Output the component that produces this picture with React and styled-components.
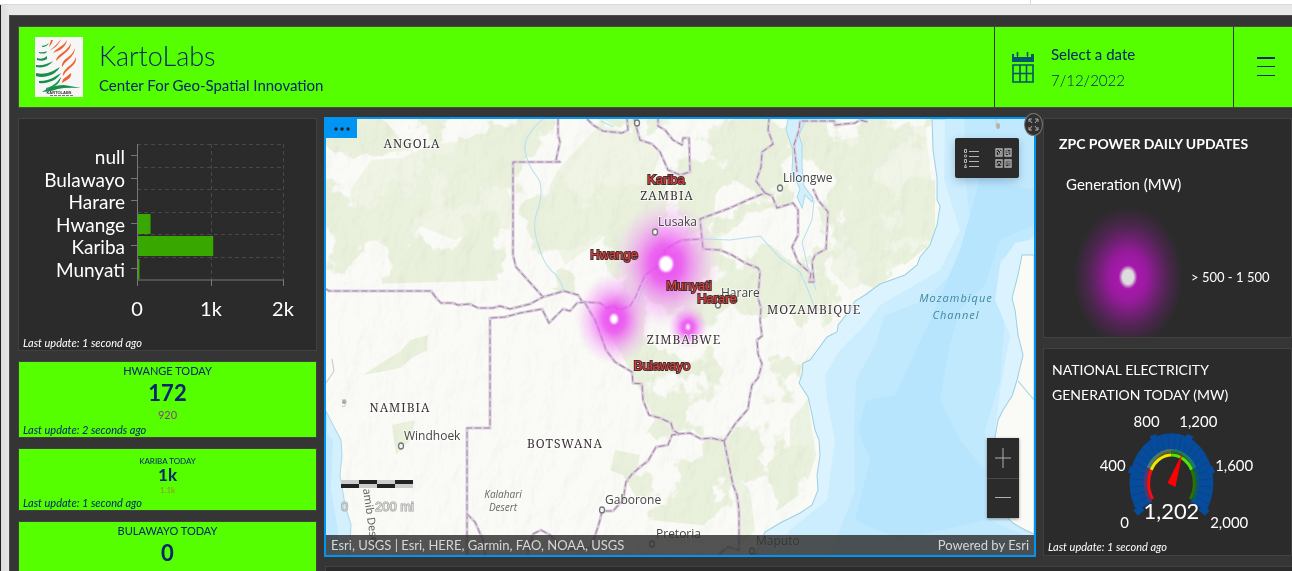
import React from "react";
import styled, { createGlobalStyle } from "styled-components";

const GlobalStyle = createGlobalStyle`
  *, *::before, *::after { box-sizing: border-box; }
  html, body { margin: 0; height: 100%; }
  body {
    background: #e4e4e4;
    color: #fff;
    font-family: Lato, "Liberation Sans", sans-serif;
    overflow: hidden;
  }
  h1, h2, h3, p { margin: 0; font-weight: 400; }
  button {
    margin: 0; padding: 0; border: 0; background: none;
    color: inherit; font: inherit; cursor: pointer;
  }
`;

const Page = styled.div`
  display: flex;
  flex-direction: column;
  height: 100vh;
  overflow: hidden;
`;

const BrowserEdge = styled.div`
  flex: 0 0 5px;
  display: flex;
  background: #fff;
  border-bottom: 1px solid #d9d9d9;
  &::before { content: ""; flex: 1; }
  &::after { content: ""; width: 262px; border-left: 1px solid #d9d9d9; }
`;

const Frame = styled.div`
  flex: 1;
  min-height: 0;
  display: flex;
  padding: 10px 0 0 8px;
  border-left: 1px solid #222;
  background: linear-gradient(90deg, #ddd, #e8e8e8 9px);
`;

const Dashboard = styled.div`
  flex: 1;
  min-width: 0;
  display: flex;
  flex-direction: column;
  gap: 10px;
  padding: 10px 0 0 8px;
  background: #353535;
  border: 1px solid #4c4c4c;
  border-width: 1px 0 0 1px;
`;

const Header = styled.header`
  flex: 0 0 82px;
  display: flex;
  background: #55ff00;
  border: 1px solid #4a4a4a;
  border-right: 0;
  color: #00266e;
`;

const Brand = styled.div`
  flex: 1;
  display: flex;
  align-items: center;
  gap: 16px;
  padding-left: 16px;
`;

const BrandText = styled.div`
  padding-top: 4px;
`;

const BrandTitle = styled.h1`
  font-size: 27px;
  line-height: 32px;
  font-weight: 300;
`;

const BrandSubtitle = styled.p`
  font-size: 15px;
  line-height: 26px;
  font-weight: 400;
`;

const DateButton = styled.button`
  flex: 0 0 239px;
  display: flex;
  align-items: center;
  gap: 17px;
  padding-left: 17px;
  text-align: left;
  border-left: 1px solid #353535;
`;

const DateText = styled.span`
  display: grid;
  font-size: 15px;
  line-height: 26px;
`;

const DateValue = styled.span`
  font-weight: 300;
`;

const MenuButton = styled.button`
  flex: 0 0 59px;
  display: grid;
  place-items: center;
  padding-left: 6px;
  border-left: 1px solid #353535;
`;

const Body = styled.main`
  flex: 1;
  min-height: 0;
  display: flex;
  gap: 7px;
`;

const Column = styled.div`
  flex: ${(p) => p.$grow} 1 0;
  min-width: 0;
  min-height: 0;
  display: flex;
  flex-direction: column;
  gap: 10px;
`;

const Row = styled.div`
  flex: 1;
  min-height: 0;
  display: flex;
  gap: 7px;
`;

const Panel = styled.section`
  flex: ${(p) => p.$flex || "0 0 auto"};
  min-height: 0;
  display: flex;
  flex-direction: column;
  overflow: hidden;
  background: #2b2b2b;
  border: 1px solid #414141;
`;

const Updated = styled.p`
  font-size: 11px;
  line-height: 14px;
  font-style: italic;
  padding-left: 4px;
  text-align: left;
`;

const ChartArea = styled.div`
  height: 217px;
  svg { display: block; width: 100%; height: 100%; }
`;

const Kpi = styled(Panel)`
  background: #55ff00;
  color: #00266e;
  text-align: center;
  padding-top: ${(p) => (p.$small ? 7 : 0)}px;
`;

const KpiTitle = styled.h2`
  font-size: ${(p) => (p.$small ? 8 : 11)}px;
  line-height: ${(p) => (p.$small ? 10 : 17)}px;
`;

const KpiValue = styled.p`
  font-size: ${(p) => (p.$small ? 17 : 22)}px;
  line-height: ${(p) => (p.$small ? 18 : 28)}px;
  font-weight: 700;
`;

const KpiReference = styled.p`
  font-size: ${(p) => (p.$small ? 8 : 11)}px;
  line-height: ${(p) => (p.$small ? 12 : 16)}px;
  color: ${(p) => (p.$small ? "#a58a35" : "#8f3a8f")};
`;

const BottomPanel = styled(Panel)`
  flex: 0 0 5px;
  border-width: 1px 0 0 1px;
  margin-left: 1px;
`;

const MapFrame = styled.section`
  flex: 711 1 0;
  min-width: 0;
  position: relative;
  border: 2px solid #0095f2;
  margin: -1px 0 -1px;
`;

const MapCanvas = styled.svg`
  display: block;
  position: absolute;
  inset: 0;
  width: 100%;
  height: 100%;
`;

const MoreButton = styled.button`
  position: absolute;
  left: 0;
  top: 0;
  width: 31px;
  height: 19px;
  display: grid;
  place-items: center;
  background: #0095f2;
`;

const ExpandButton = styled.button`
  position: absolute;
  right: -9px;
  top: -6px;
  width: 19px;
  height: 23px;
  display: grid;
  place-items: center;
  background: #303030;
  border: 1px solid #777;
  border-radius: 50%;
`;

const MapTools = styled.div`
  position: absolute;
  right: 15px;
  top: 19px;
  width: 64px;
  height: 40px;
  display: flex;
  background: #2b2b2b;
  border-radius: 2px;
  box-shadow: 0 3px 8px rgba(0, 40, 80, 0.25);
  button { flex: 1; display: grid; place-items: center; }
`;

const ZoomControl = styled.div`
  position: absolute;
  right: 15px;
  bottom: 37px;
  width: 32px;
  height: 80px;
  display: flex;
  flex-direction: column;
  background: #2b2b2b;
  box-shadow: 0 1px 3px rgba(0, 0, 0, 0.4);
  button { flex: 1; display: grid; place-items: center; }
  button + button { border-top: 1px solid #484848; }
`;

const Attribution = styled.footer`
  position: absolute;
  left: 0;
  right: 0;
  bottom: 0;
  height: 20px;
  padding: 0 5px;
  display: flex;
  justify-content: space-between;
  background: rgba(50, 50, 50, 0.84);
  color: #d6d6d6;
  font-size: 13px;
  line-height: 20px;
  white-space: nowrap;
`;

const LegendTitle = styled.h2`
  padding: 14px 0 0 15px;
  font-size: 14px;
  line-height: 22px;
  font-weight: 700;
  white-space: nowrap;
`;

const LegendLayer = styled.h3`
  padding: 18px 0 0 22px;
  font-size: 15px;
  line-height: 22px;
`;

const LegendItem = styled.div`
  display: flex;
  align-items: center;
  gap: 8px;
  padding: 12px 0 0 29px;
  font-size: 13px;
  white-space: nowrap;
`;

const Glow = styled.div`
  flex: none;
  width: 110px;
  height: 140px;
  background: radial-gradient(ellipse closest-side, #ddd 0 10%, #a619ac 17%, #981a9e 35%, #742078 52%, #4b264d 74%, #2b2b2b 100%);
`;

const GaugeTitle = styled.h2`
  max-width: 210px;
  padding: 8px 8px 0;
  font-size: 14px;
  line-height: 25px;
`;

const GaugeArea = styled.div`
  height: 133px;
  svg { display: block; width: 100%; height: 100%; }
`;

function Logo() {
  const g = "#159048";
  const o = "#f0622d";
  return (
    <svg width="48" height="60" viewBox="0 0 48 60" role="img" aria-label="KartoLabs logo">
      <rect width="48" height="60" fill="#f6f6f6" />
      <g fill={g}>
        <path d="M7 9q4 0 7-3q-2 4-7 4z" />
        <path d="M4 15q5 1 8-1l-1 2q-4 1-7 0z" />
        <path d="M2 21q6 2 10-2v3q-4 3-10 1z" />
        <path d="M1 28q9 1 17-4q-6 8-17 6z" />
        <path d="M1 36q9 2 17-2l7-4q-4 7-12 9q-7 2-12 0z" />
        <path d="M4 44q10 0 17-5l5-3q-4 7-12 9q-6 2-10 1z" />
        <path d="M11 51q6-1 11-6l4-5q-1 6-6 9q-4 3-9 3z" />
        <path d="M7 55q9-7 22-7l17 3q-15-1-23 1q-8 3-16 3z" />
      </g>
      <g fill={o}>
        <path d="M16 3l2 0q-1 4-4 7z" />
        <path d="M26 2q-2 7-12 12q8-6 12-12z" />
        <path d="M32 3q-1 6-7 10l-7 3q2-3 7-6q5-3 7-7z" />
        <path d="M36 6q0 6-7 11q-4 3-8 7q0-4 6-8q6-4 9-10z" />
        <path d="M40 11q0 6-7 12q-4 3-6 7q-1-5 5-9q6-4 8-10z" />
        <path d="M41 20q1 6-6 11q-5 4-7 8q-1-4 5-9q6-4 8-10z" />
        <path d="M36 36q1 4-4 7l-5 3q0-4 4-6z" />
      </g>
      <text x="24" y="57" fontFamily="Liberation Sans" fontSize="4" fontWeight="700" fill="#333" textAnchor="middle">KARTOLABS</text>
      <path d="M15 58.500h24" stroke="#777" strokeDasharray="3 1" />
    </svg>
  );
}

function CalendarIcon() {
  return (
    <svg width="22" height="32" viewBox="0 0 22 32" fill="none" stroke="#00566b" strokeWidth="1.600" aria-hidden="true">
      <path d="M0 3h2v3h3V3h1v3h9V3h1v3h3V3h3v8H0z" fill="#00566b" stroke="none" />
      <path d="M5.500 1v4M15.500 1v4" />
      <path d="M1 14h20v17H1zM8 14v17M14.500 14v17M1 22.500h20" />
    </svg>
  );
}

const bars = [
  { name: "null", value: 0 },
  { name: "Bulawayo", value: 0 },
  { name: "Harare", value: 0 },
  { name: "Hwange", value: 172 },
  { name: "Kariba", value: 1030 },
  { name: "Munyati", value: 20 },
];

function BarChart() {
  return (
    <svg viewBox="0 0 297 217" role="img" aria-label="Generation by station">
      <g stroke="#484848" strokeDasharray="4 3">
        {[0, 1, 2, 3, 4, 5].map((i) => (
          <path key={i} d={`M118 ${25.5 + Math.round(i * 22.6)}H264`} />
        ))}
        <path d="M192.500 25V161M264.500 25V161" />
      </g>
      {bars.map((b, i) => {
        const y = 26 + Math.round(i * 22.5);
        return (
          <g key={b.name}>
            <rect x="119" y={y + 1} width={(b.value * 73) / 1000} height="20" fill="#38a800" />
            <path d={`M112 ${y + 10.5}h6`} stroke="#777" />
            <text x="106" y={y + 19} textAnchor="end" fontSize="19" fill="#fff">{b.name}</text>
          </g>
        );
      })}
      <path d="M118.500 25V167M118 161H265M192.500 161v6M264.500 161v6" stroke="#797979" />
      <g fontSize="20" fill="#fff" textAnchor="middle">
        <text x="118" y="197">0</text>
        <text x="192" y="197">1k</text>
        <text x="264" y="197">2k</text>
      </g>
    </svg>
  );
}

const borders = [
  "M558 119V135L560 142L556 160L560 162H513V255L516 267L543 297L564 291L578 295L583 303",
  "M326 289L329 291H431L437 299L441 303L453 303L458 305L470 304L478 308L493 308L500 306L510 309L530 304L543 297",
  "M467 555V428H490V318L505 317L520 313L542 309L549 323L563 309L570 311L577 303L585 302L600 303L607 308L614 306L619 310L630 306L635 298L645 275L655 268L662 262L665 250L672 245L682 240L703 239",
  "M585 303L595 320L600 333L606 350L615 362L632 372L633 383L642 384L643 400L649 415L660 418L671 423L673 430L679 434L672 435L668 445L656 447L648 461L640 467L632 474L626 482L623 500L613 511L602 511L600 520L595 536L590 548L565 550L550 535L541 530L533 534L527 555",
  "M467 514L475 522L483 540L485 555",
  "M678 434L690 433L701 439L711 438L724 441L735 424L748 409L750 395L752 385L758 378L762 364L758 354L757 340L762 336L760 320L761 308L758 298L760 272L758 268L745 263L732 255L720 250L703 249L700 219L730 208L750 199L765 193L756 181L761 167L762 152L773 144L768 130L769 119",
  "M724 441L728 460L733 485L737 495L739 510V550L728 547L718 555",
  "M765 193L772 196L777 208L793 203L798 210V235L792 247L798 262L811 274L809 282L814 282L812 262L815 255L826 249L828 212L818 200L813 189",
  "M797 172L794 145L799 130L800 121H834L835 125L855 123L860 120L868 122",
  "M587 119L593 125L603 131L622 133L628 130L627 119",
  "M634 119L640 140L652 144L660 152L668 170L680 175L690 172L689 138L683 138L682 145L673 140L665 130L658 126V119",
];

const channelCoast =
  "M932 119L933 150L937 178L937 200L940 206L937 225L930 245L920 257L917 265L905 275L880 284L865 295L855 301L850 310L838 325L837 332L827 337L810 360L803 363L802 375L799 383L808 397L811 410L815 430L819 440L820 455L817 475L818 490L812 505L800 513L780 523L765 532L755 555";

const madagascar =
  "M1034 255L1022 255L1018 275L1012 298L1015 310L1018 335L1023 355L1017 380L1012 396L1003 410L998 420L995 437L996 500L1003 513L1013 523L1025 530L1034 534Z";

const countries = [
  ["ANGOLA", 412, 148],
  ["ZAMBIA", 667, 200],
  ["ZIMBABWE", 684, 344],
  ["MOZAMBIQUE", 814, 314],
  ["NAMIBIA", 400, 412],
  ["BOTSWANA", 565, 448],
];

const cities = [
  ["Lusaka", 658, 226, 655, 232],
  ["Harare", 721, 297, 718, 305],
  ["Lilongwe", 783, 182, 780, 188],
  ["Windhoek", 404, 440, 401, 446],
  ["Gaborone", 605, 504, 602, 510],
  ["Pretoria", 656, 538, 652, 544],
  ["Maputo", 756, 545, 752, 551],
];

const plants = [
  ["Kariba", 666, 184],
  ["Hwange", 614, 259],
  ["Munyati", 689, 290],
  ["Harare", 717, 303],
  ["Bulawayo", 662, 370],
];

const glows = [
  [666, 264, 54, 64, 7, 8],
  [614, 319, 38, 46, 4, 5],
  [688, 327, 20, 22, 2, 3],
];

function RegionMap() {
  return (
    <MapCanvas viewBox="326 119 708 436" preserveAspectRatio="xMidYMid slice" role="img" aria-label="Map of power stations in Zimbabwe">
      <defs>
        <filter id="vegetation" x="0" y="0" width="100%" height="100%" colorInterpolationFilters="sRGB">
          <feTurbulence type="fractalNoise" baseFrequency="0.018 0.016" numOctaves="5" seed="8" result="n" />
          <feColorMatrix in="n" type="matrix" values="0 0 0 0 0.914  0 0 0 0 0.945  0 0 0 0 0.867  30 0 0 0 -14.500" result="c" />
          <feComposite in="c" in2="SourceGraphic" operator="in" />
        </filter>
        <filter id="relief" x="0" y="0" width="100%" height="100%" colorInterpolationFilters="sRGB">
          <feTurbulence type="fractalNoise" baseFrequency="0.06 0.035" numOctaves="4" seed="3" />
          <feDiffuseLighting surfaceScale="1.600" diffuseConstant="1.100" lightingColor="#fff">
            <feDistantLight azimuth="225" elevation="62" />
          </feDiffuseLighting>
        </filter>
        <radialGradient id="glow">
          <stop offset="0" stopColor="#e83df0" stopOpacity="0.95" />
          <stop offset="0.3" stopColor="#ec4ff3" stopOpacity="0.85" />
          <stop offset="0.6" stopColor="#f07cf6" stopOpacity="0.5" />
          <stop offset="1" stopColor="#f5b0fa" stopOpacity="0" />
        </radialGradient>
        <filter id="soft"><feGaussianBlur stdDeviation="1" /></filter>
      </defs>
      <rect x="326" y="119" width="708" height="436" fill="#fafaf6" />
      <path
        d="M326 119H935V240L850 310L800 370L820 480L750 530L650 520L620 470L655 420L630 370L590 300L520 280L326 285Z"
        fill="#fff"
        filter="url(#vegetation)"
      />
      <g fill="#e9f1dd">
        <path d="M350 190L372 160L402 158L430 145L470 140L500 175L512 200L510 230L480 225L455 240L420 226L400 255L375 240L355 220Z" opacity="0.7" />
        <path d="M562 165L600 125L640 135L660 155L650 180L625 195L600 240L565 265L545 220L550 185Z" opacity="0.7" />
        <path d="M840 140L925 125L932 190L930 235L900 265L850 290L830 270L845 220Z" opacity="0.6" />
        <path d="M386 360L400 352L410 340L428 335L427 350L412 358L400 368L380 372L363 375Z" />
        <path d="M790 420L800 410L808 398L812 430L816 455L808 480L790 460ZM730 470L750 490L755 530L742 545Z" opacity="0.8" />
        <path d="M615 450L640 455L635 480L610 470ZM392 425L415 420L410 440L396 455Z" />
      </g>
      <rect x="326" y="119" width="708" height="436" filter="url(#relief)" opacity="0.14" style={{ mixBlendMode: "multiply" }} />
      <g fill="none" stroke="#b5dff0">
        <path d="M543 119Q524 135 525 150Q527 165 538 178Q545 190 536 215Q532 230 540 250Q544 265 556 275Q563 284 564 292" />
        <path d="M703 239L730 240L760 236L780 258L800 272L808 290L815 309M814 200L812 220L802 242L808 268L816 290" />
        <path d="M649 279L642 290L638 302M601 121L613 127" />
      </g>
      <path d="M788 119L786 130L793 150L792 172L800 189L797 197L802 208L805 195L812 202L813 198L804 186L802 168L802 145L799 135L806 119Z" fill="#d3effc" stroke="#a8d9ec" />
      <path d={channelCoast + "H1034V119Z"} fill="#daf3fe" stroke="#9bcfe2" />
      <path d="M945 119L944 180L960 230L940 270L915 285L880 305L865 325L840 350L825 375L827 400L835 440L827 500L790 530L775 555H1034V119Z" fill="#cbedfe" />
      <path d="M965 119L963 160L970 220L955 270L925 300L885 315L875 345L856 380L854 430L855 490L840 530L830 555H1034V540L990 520L985 430L1000 380L1004 330L1000 260L1034 235V119Z" fill="#c1e9fe" />
      <path d="M985 160L1010 185L1034 190V225L1000 240L985 285L960 310L950 345L940 400L960 440L985 470L985 520L900 540L855 520L870 460L858 430L866 400L895 395L930 320L960 250Z" fill="#b8e5fe" />
      <path d="M1034 239L1015 243L1000 265L995 300L1010 335L1000 390L995 430H1034Z" fill="#daf3fe" />
      <path d={madagascar} fill="#fafaf6" stroke="#9bcfe2" />
      <path d="M1034 400L1018 381" stroke="#9bcfe2" />
      <path d="M326 411L334 427L341 440L342 455L340 475L345 505L351 525L349 555H326Z" fill="#d5f0fd" stroke="#a8d9ec" />
      <path d="M326 433L333 440L331 490L338 530V555H326Z" fill="#c2e9fd" />
      <g fill="none" strokeLinejoin="round">
        {borders.map((d) => (
          <g key={d}>
            <path d={d} stroke="#d9cbdc" strokeWidth="3" />
            <path d={d} stroke="#a28ca6" strokeDasharray="6 3" />
          </g>
        ))}
      </g>
      <g fill="none" stroke="#c9c8c2">
        <path d="M342 400q5-2 4 3t-4 3M996 119v7M326 383l8-12-2-12" />
      </g>
      <circle cx="344" cy="402" r="2" fill="#a9a49c" />
      <ellipse cx="998" cy="126" rx="2" ry="3" fill="#b6b4a8" />

      <g fill="url(#glow)">
        {glows.map(([x, y, rx, ry]) => (
          <ellipse key={x} cx={x} cy={y} rx={rx} ry={ry} />
        ))}
      </g>
      <g fill="#fff" filter="url(#soft)">
        {glows.map(([x, y, , , rx, ry]) => (
          <ellipse key={x} cx={x} cy={y} rx={rx} ry={ry} />
        ))}
      </g>

      <g fontFamily="'Open Sans', 'Noto Sans', sans-serif" fontSize="12" fill="#454545" stroke="#fff" strokeOpacity="0.5" strokeWidth="2" paintOrder="stroke">
        {cities.map(([name, x, y]) => (
          <text key={name} x={x} y={y}>{name}</text>
        ))}
      </g>
      <g fill="#f4f4f4" stroke="#777" strokeWidth="1.300">
        {cities.map(([name, , , cx, cy]) => (
          <ellipse key={name} cx={cx} cy={cy} rx="2.500" ry="3" />
        ))}
        <ellipse cx="637" cy="123" rx="2.500" ry="3" />
      </g>

      <g fontFamily="'Noto Serif', 'Liberation Serif', serif" fontSize="12" fill="#3b3238" letterSpacing="1" textAnchor="middle" stroke="#fff" strokeOpacity="0.6" strokeWidth="2" paintOrder="stroke">
        {countries.map(([name, x, y]) => (
          <text key={name} x={x} y={y}>{name}</text>
        ))}
      </g>
      <g fontFamily="'Open Sans', 'Noto Sans', sans-serif" fontStyle="italic" fontSize="11" textAnchor="middle">
        <g fill="#4287a0" letterSpacing="1">
          <text x="956" y="302">Mozambique</text>
          <text x="956" y="319">Channel</text>
        </g>
        <g fill="#666" fontSize="10">
          <text x="503" y="498">Kalahari</text>
          <text x="503" y="511">Desert</text>
        </g>
      </g>
      <text transform="translate(363 489) rotate(82)" fontFamily="'Noto Sans', sans-serif" fontSize="11" fill="#666">amib Desert</text>
      <g fontFamily="'Liberation Sans', sans-serif" fontSize="13" textAnchor="middle" fill="#ec3b3b" stroke="#403030" strokeWidth="2" paintOrder="stroke">
        {plants.map(([name, x, y]) => (
          <text key={name} x={x} y={y}>{name}</text>
        ))}
      </g>
      <g>
        <path d="M341 480h72v8h-72z" fill="#ccc" />
        <path d="M341 484h18v4h-18zM359 480h18v4h-18zM377 484h18v4h-18zM395 480h18v4h-18z" fill="#222" />
        <g fontFamily="'Liberation Sans', sans-serif" fontSize="13" fill="#d8d8d8" stroke="#999" strokeWidth="1" paintOrder="stroke">
          <text x="341" y="511">0</text>
          <text x="375" y="511">200 mi</text>
        </g>
      </g>
    </MapCanvas>
  );
}

const CX = 128;
const CY = 74;
const point = (deg, rx, ry) => {
  const a = (deg * Math.PI) / 180;
  return [CX + rx * Math.cos(a), CY - ry * Math.sin(a)];
};
const arc = (from, to, rx, ry) => {
  const large = from - to > 180 ? 1 : 0;
  return `M${point(from, rx, ry).join(" ")}A${rx} ${ry} 0 ${large} 1 ${point(to, rx, ry).join(" ")}`;
};
const ray = (deg, r1, r2) =>
  `M${point(deg, r1[0], r1[1]).join(" ")}L${point(deg, r2[0], r2[1]).join(" ")}`;
const minorTicks = Array.from({ length: 26 }, (_, i) => 215 - i * 10);
const majorTicks = [215, 165, 115, 65, 15, -35];
const bands = [
  [215, 152, "#ff0a0a"],
  [152, 90, "#eee800"],
  [90, 28, "#4ce600"],
  [28, -35, "#267300"],
];

function Gauge() {
  return (
    <svg viewBox="0 -2 248 133" role="img" aria-label="1,202 of 2,000 megawatts">
      <path d={arc(215, -35, 33, 41)} fill="none" stroke="#064b9c" strokeWidth="18" />
      <g stroke="#0a4487">
        {minorTicks.map((t) => <path key={t} d={ray(t, [27, 33], [41, 50])} />)}
      </g>
      <g stroke="#064b9c" strokeWidth="7">
        {majorTicks.map((t) => <path key={t} d={ray(t, [36, 43], [44, 53])} />)}
      </g>
      {bands.map(([from, to, color]) => (
        <g key={color} fill="none" stroke={color}>
          <path d={arc(from, to, 26, 32)} strokeWidth="4" opacity="0.3" />
          <path d={arc(from, to, 23, 28)} strokeWidth="3" />
        </g>
      ))}
      <path d="M139 44L132 78L124 74Z" fill="#f00" />
      <g fill="#fff" fontSize="15" textAnchor="middle">
        <text x="81" y="119">0</text>
        <text x="69" y="62">400</text>
        <text x="103" y="18">800</text>
        <text x="155" y="18">1,200</text>
        <text x="191" y="62">1,600</text>
        <text x="186" y="119">2,000</text>
        <text x="128" y="110" fontSize="22">1,202</text>
      </g>
    </svg>
  );
}

export default function App() {
  return (
    <>
      <GlobalStyle />
      <Page>
        <BrowserEdge />
        <Frame>
          <Dashboard>
            <Header>
              <Brand>
                <Logo />
                <BrandText>
                  <BrandTitle>KartoLabs</BrandTitle>
                  <BrandSubtitle>Center For Geo-Spatial Innovation</BrandSubtitle>
                </BrandText>
              </Brand>
              <DateButton>
                <CalendarIcon />
                <DateText>
                  <span>Select a date</span>
                  <DateValue>7/12/2022</DateValue>
                </DateText>
              </DateButton>
              <MenuButton aria-label="Menu">
                <svg width="18" height="20" viewBox="0 0 18 20" stroke="#00266e" aria-hidden="true">
                  <path d="M0 1h18" strokeWidth="2" />
                  <path d="M0 9.500h18M0 18.500h18" />
                </svg>
              </MenuButton>
            </Header>
            <Body>
              <Column $grow={299}>
                <Panel>
                  <ChartArea><BarChart /></ChartArea>
                  <Updated>Last update: 1 second ago</Updated>
                </Panel>
                <Kpi>
                  <KpiTitle>HWANGE TODAY</KpiTitle>
                  <KpiValue>172</KpiValue>
                  <KpiReference>920</KpiReference>
                  <Updated>Last update: 2 seconds ago</Updated>
                </Kpi>
                <Kpi $small>
                  <KpiTitle $small>KARIBA TODAY</KpiTitle>
                  <KpiValue $small>1k</KpiValue>
                  <KpiReference $small>1.1k</KpiReference>
                  <Updated>Last update: 1 second ago</Updated>
                </Kpi>
                <Kpi $flex="1 0 76px">
                  <KpiTitle>BULAWAYO TODAY</KpiTitle>
                  <KpiValue>0</KpiValue>
                </Kpi>
              </Column>
              <Column $grow={968}>
                <Row>
                  <MapFrame aria-label="Map">
                    <RegionMap />
                    <MoreButton aria-label="More options">
                      <svg width="16" height="4" viewBox="0 0 16 4" fill="#222" aria-hidden="true">
                        <circle cx="2" cy="2" r="1.700" /><circle cx="8" cy="2" r="1.700" /><circle cx="14" cy="2" r="1.700" />
                      </svg>
                    </MoreButton>
                    <MapTools>
                      <button aria-label="Legend">
                        <svg width="15" height="20" viewBox="0 0 15 20" fill="none" stroke="#b5b5b5" aria-hidden="true">
                          <path d="M5 3.500h10M5 8.500h10M5 13.500h10M5 18.500h10" />
                          <path d="M.5 1.500h2v3h-2zM.5 11.500h2v3h-2zM.5 19.500l1-3 1 3z" />
                          <circle cx="1.500" cy="8" r="1.200" />
                        </svg>
                      </button>
                      <button aria-label="Basemaps">
                        <svg width="17" height="20" viewBox="0 0 17 20" fill="none" stroke="#b5b5b5" aria-hidden="true">
                          <path d="M1 1h6v7H1zM10 1h6v7h-6zM1 12h6v7H1zM10 12h6v7h-6z" strokeWidth="1.300" />
                          <path d="M2 3l2 2v2M4 2l2 2-1 3M12 2v2h3M11 5l3 1v2M2 17l2-3 2 3M11 14h4M14 14v4M11 16h2" />
                        </svg>
                      </button>
                    </MapTools>
                    <ZoomControl>
                      <button aria-label="Zoom in">
                        <svg width="16" height="20" viewBox="0 0 16 20" stroke="#b0b0b0" aria-hidden="true"><path d="M0 10h16M8 0v20" /></svg>
                      </button>
                      <button aria-label="Zoom out">
                        <svg width="16" height="20" viewBox="0 0 16 20" stroke="#b0b0b0" aria-hidden="true"><path d="M0 9.500h16" /></svg>
                      </button>
                    </ZoomControl>
                    <Attribution>
                      <span>Esri, USGS | Esri, HERE, Garmin, FAO, NOAA, USGS</span>
                      <span>Powered by Esri</span>
                    </Attribution>
                    <ExpandButton aria-label="Expand">
                      <svg width="11" height="13" viewBox="0 0 11 13" fill="none" stroke="#aaa" aria-hidden="true">
                        <path d="M1 4V1h3M1 1l3 4M7 1h3v3M10 1L7 5M1 9v3h3M1 12l3-4M7 12h3V9M10 12L7 8" />
                      </svg>
                    </ExpandButton>
                  </MapFrame>
                  <Column $grow={250}>
                    <Panel $flex="220 1 0">
                      <LegendTitle>ZPC POWER DAILY UPDATES</LegendTitle>
                      <LegendLayer>Generation (MW)</LegendLayer>
                      <LegendItem>
                        <Glow />
                        <span>&gt; 500 - 1 500</span>
                      </LegendItem>
                    </Panel>
                    <Panel $flex="208 1 0">
                      <GaugeTitle>NATIONAL ELECTRICITY GENERATION TODAY (MW)</GaugeTitle>
                      <GaugeArea><Gauge /></GaugeArea>
                      <Updated>Last update: 1 second ago</Updated>
                    </Panel>
                  </Column>
                </Row>
                <BottomPanel />
              </Column>
            </Body>
          </Dashboard>
        </Frame>
      </Page>
    </>
  );
}
